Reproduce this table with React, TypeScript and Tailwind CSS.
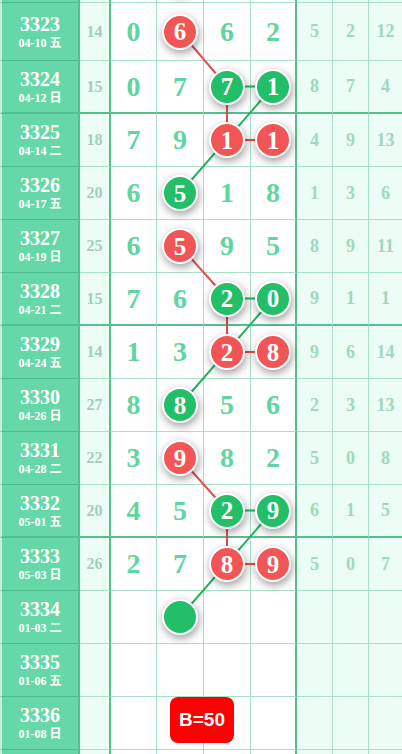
import React from "react";

type Ball = { col: 0 | 1 | 2; red: boolean; blank?: boolean };

interface Row {
  id: string;
  date: string;
  side?: number;
  digits?: number[];
  small?: number[];
  balls?: Ball[];
  h: number;
  thick?: boolean;
  badge?: string;
}

// first row sits above the fold; only its bottom edge shows
const rows: Row[] = [
  { id: "", date: "", h: 53, balls: [{ col: 0, red: false, blank: true }] },
  { id: "3323", date: "04-10 五", side: 14, digits: [0, 6, 6, 2], small: [5, 2, 12], h: 58, balls: [{ col: 0, red: true }] },
  { id: "3324", date: "04-12 日", side: 15, digits: [0, 7, 7, 1], small: [8, 7, 4], h: 53, thick: true, balls: [{ col: 1, red: false }, { col: 2, red: false }] },
  { id: "3325", date: "04-14 二", side: 18, digits: [7, 9, 1, 1], small: [4, 9, 13], h: 53, balls: [{ col: 1, red: true }, { col: 2, red: true }] },
  { id: "3326", date: "04-17 五", side: 20, digits: [6, 5, 1, 8], small: [1, 3, 6], h: 53, balls: [{ col: 0, red: false }] },
  { id: "3327", date: "04-19 日", side: 25, digits: [6, 5, 9, 5], small: [8, 9, 11], h: 53, balls: [{ col: 0, red: true }] },
  { id: "3328", date: "04-21 二", side: 15, digits: [7, 6, 2, 0], small: [9, 1, 1], h: 53, thick: true, balls: [{ col: 1, red: false }, { col: 2, red: false }] },
  { id: "3329", date: "04-24 五", side: 14, digits: [1, 3, 2, 8], small: [9, 6, 14], h: 53, balls: [{ col: 1, red: true }, { col: 2, red: true }] },
  { id: "3330", date: "04-26 日", side: 27, digits: [8, 8, 5, 6], small: [2, 3, 13], h: 53, balls: [{ col: 0, red: false }] },
  { id: "3331", date: "04-28 二", side: 22, digits: [3, 9, 8, 2], small: [5, 0, 8], h: 53, balls: [{ col: 0, red: true }] },
  { id: "3332", date: "05-01 五", side: 20, digits: [4, 5, 2, 9], small: [6, 1, 5], h: 53, thick: true, balls: [{ col: 1, red: false }, { col: 2, red: false }] },
  { id: "3333", date: "05-03 日", side: 26, digits: [2, 7, 8, 9], small: [5, 0, 7], h: 53, balls: [{ col: 1, red: true }, { col: 2, red: true }] },
  { id: "3334", date: "01-03 二", h: 53, balls: [{ col: 0, red: false, blank: true }] },
  { id: "3335", date: "01-06 五", h: 53 },
  { id: "3336", date: "01-08 日", h: 53, badge: "B=50" },
  { id: "", date: "", h: 53 },
];

const colX = [180, 227, 273];

// centre of each row's content box, measured from the grid top
const centers: number[] = [];
{
  let top = 0;
  for (const r of rows) {
    const bb = r.thick ? 2 : 1;
    centers.push(top + (r.h - bb) / 2);
    top += r.h;
  }
}
const totalH = rows.reduce((s, r) => s + r.h, 0);

const idx = (id: string) => rows.findIndex((r) => r.id === id);
const pt = (id: string, col: number) => [colX[col], centers[idx(id)]] as const;

// polylines: red zig-zags and green hooks
const red: [string, number][][] = [
  [["3323", 0], ["3324", 1], ["3325", 1], ["3325", 2]],
  [["3327", 0], ["3328", 1], ["3329", 1], ["3329", 2]],
  [["3331", 0], ["3332", 1], ["3333", 1], ["3333", 2]],
];
const green: [string, number][][] = [
  [["3324", 1], ["3324", 2], ["3326", 0]],
  [["3328", 1], ["3328", 2], ["3330", 0]],
  [["3332", 1], ["3332", 2], ["3334", 0]],
];

const serif = "font-['Liberation_Serif','Times_New_Roman',serif]";

function Dot({ ball, n }: { ball: Ball; n?: number }) {
  return (
    <div
      className={`relative z-10 flex h-9 w-9 items-center justify-center rounded-full border-2 border-white shadow-[1px_3px_8px_rgba(0,0,0,0.4)] ${
        ball.red ? "bg-[#f25555]" : "bg-[#22bf68]"
      } ${serif} text-[25px] font-bold leading-none text-white`}
    >
      {ball.blank ? null : n}
    </div>
  );
}

function GridRow({ row }: { row: Row }) {
  const bb = row.thick
    ? "border-b-2 border-b-[#55c08e]"
    : "border-b border-b-[#a9e1c7]";
  const bbLeft = row.thick
    ? "border-b-2 border-b-[#55c08e]"
    : "border-b border-b-[#50bd8c]";
  const ballAt = (c: number) => row.balls?.find((b) => b.col === c);

  const mainCell = (c: number, w: string, edge: string) => {
    const b = ballAt(c);
    const n = row.digits?.[c + 1];
    return (
      <div className={`${w} ${edge} ${bb} flex items-center justify-center bg-white`}>
        {b ? (
          <Dot ball={b} n={n} />
        ) : (
          <span className={`${serif} text-[28px] font-bold text-[#5fd5a1]`}>{n}</span>
        )}
      </div>
    );
  };

  return (
    <div className="relative flex" style={{ height: row.h }}>
      <div
        className={`flex w-[80px] flex-col items-center justify-center border-l-2 border-r-2 border-l-[#c9ecdc] border-r-[#55c08e] bg-[#66d8a8] ${bbLeft} ${serif} font-bold text-white`}
      >
        {row.id && <div className="text-[20px] leading-[22px]">{row.id}</div>}
        {row.date && (
          <div className="font-['Liberation_Serif','Noto_Sans_CJK_SC',serif] text-[12px] leading-[16px]">
            {row.date}
          </div>
        )}
      </div>
      <div
        className={`flex w-[31px] items-center justify-center border-r-2 border-r-[#55c08e] bg-[#ebfdf5] ${bb} ${serif} text-[16px] font-bold text-[#a4cfb6]`}
      >
        {row.side}
      </div>
      <div className={`flex w-[46px] items-center justify-center border-r border-r-[#a9e1c7] bg-white ${bb}`}>
        <span className={`${serif} text-[28px] font-bold text-[#5fd5a1]`}>{row.digits?.[0]}</span>
      </div>
      {mainCell(0, "w-[47px]", "border-r border-r-[#a9e1c7]")}
      {mainCell(1, "w-[47px]", "border-r border-r-[#a9e1c7]")}
      {mainCell(2, "w-[46px]", "border-r-2 border-r-[#55c08e]")}
      {[0, 1, 2].map((i) => (
        <div
          key={i}
          className={`flex items-center justify-center bg-[#ebfdf5] ${bb} ${
            i < 2 ? "w-[36px] border-r border-r-[#a9e1c7]" : "flex-1"
          } ${serif} text-[18px] font-bold text-[#a0d8bc]`}
        >
          {row.small?.[i]}
        </div>
      ))}
      {row.badge && (
        <div className="absolute left-[170px] top-0 z-10 flex h-[46px] w-[64px] items-center justify-center rounded-[8px] bg-[#ff0000] font-['Liberation_Sans',Arial,sans-serif] text-[19px] font-bold text-white">
          {row.badge}
        </div>
      )}
    </div>
  );
}

export default function App() {
  return (
    <div className="h-[754px] w-[402px] overflow-hidden bg-white">
      <div className="relative -mt-[50px]">
        {rows.map((r, i) => (
          <GridRow key={i} row={r} />
        ))}
        <svg
          className="pointer-events-none absolute left-0 top-0"
          width={402}
          height={totalH}
        >
          {red.map((line, i) => (
            <polyline
              key={`r${i}`}
              points={line.map(([id, c]) => pt(id, c).join(",")).join(" ")}
              fill="none"
              stroke="#e04d4d"
              strokeWidth={2}
            />
          ))}
          {green.map((line, i) => (
            <polyline
              key={`g${i}`}
              points={line.map(([id, c]) => pt(id, c).join(",")).join(" ")}
              fill="none"
              stroke="#22b362"
              strokeWidth={2}
            />
          ))}
        </svg>
      </div>
    </div>
  );
}
